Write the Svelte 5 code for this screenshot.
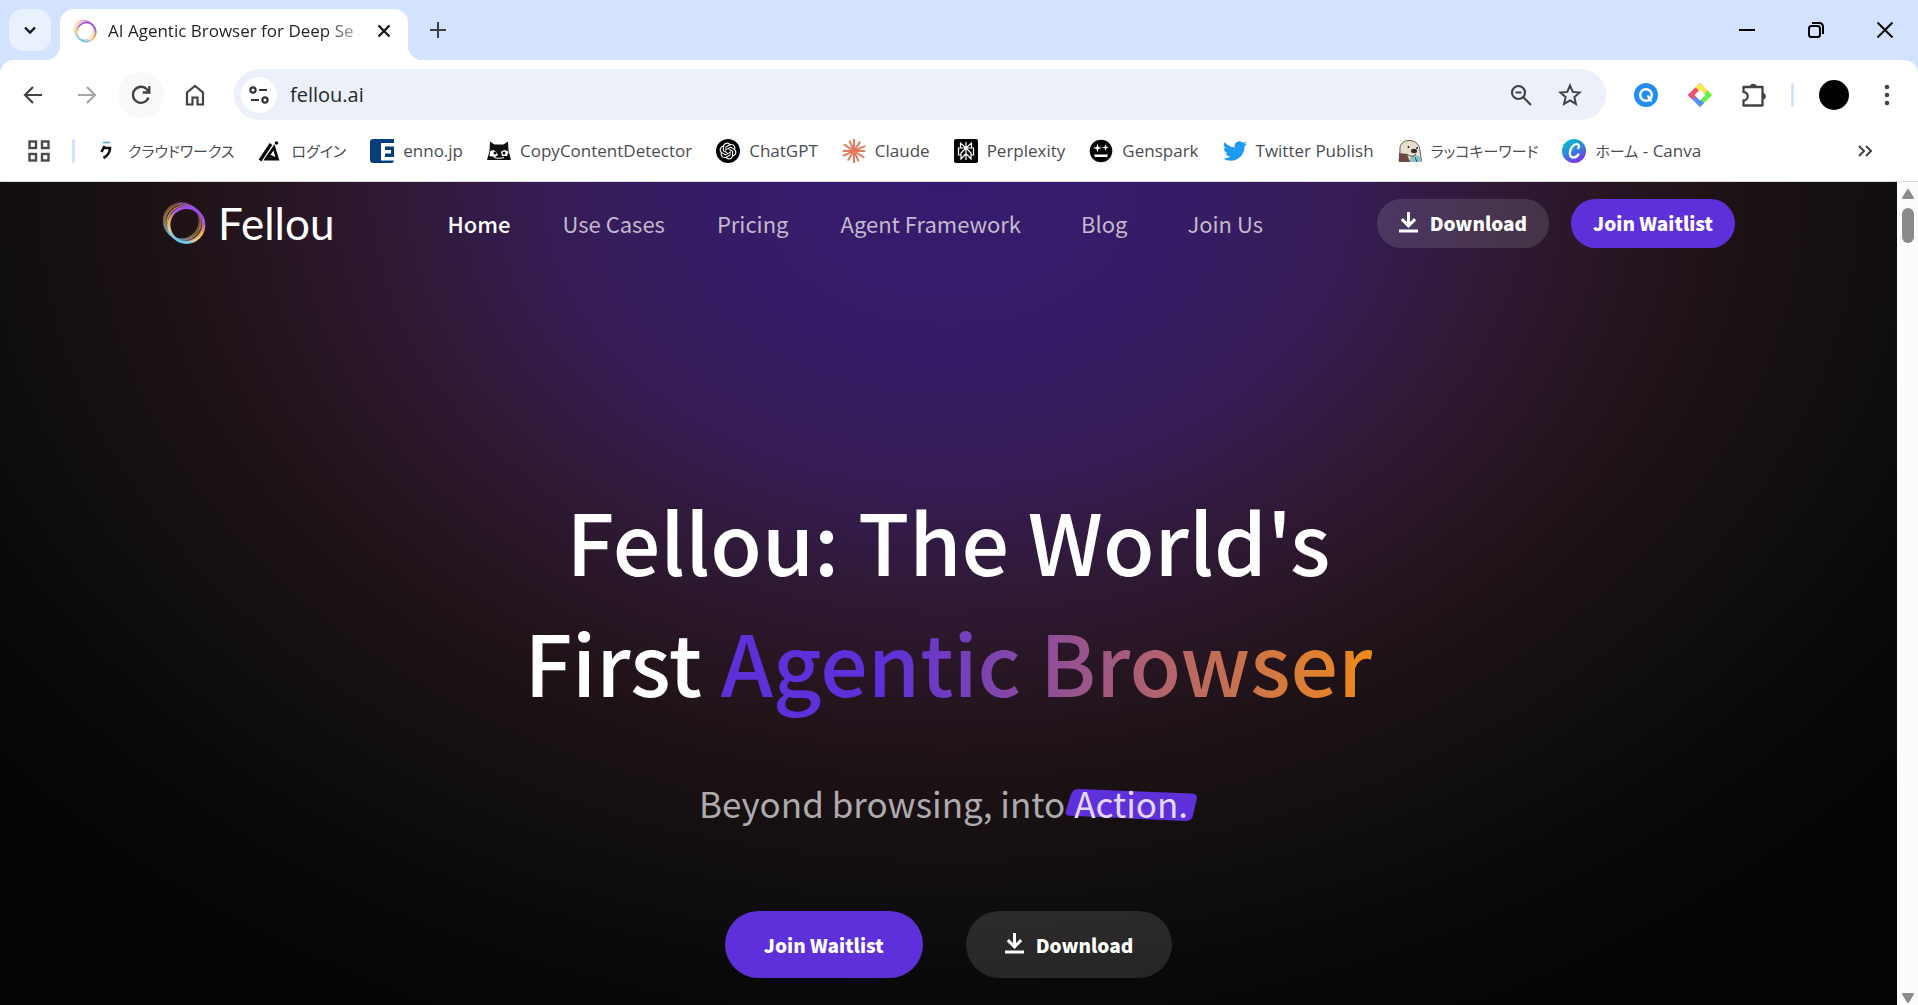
<script>
  const bookmarks = [
    { icon: 'crowd', kana: 'クラウドワークス', label: '' },
    { icon: 'login', kana: 'ログイン', label: '' },
    { icon: 'enno', kana: '', label: 'enno.jp' },
    { icon: 'ccd', kana: '', label: 'CopyContentDetector' },
    { icon: 'chatgpt', kana: '', label: 'ChatGPT' },
    { icon: 'claude', kana: '', label: 'Claude' },
    { icon: 'perplexity', kana: '', label: 'Perplexity' },
    { icon: 'genspark', kana: '', label: 'Genspark' },
    { icon: 'twitter', kana: '', label: 'Twitter Publish' },
    { icon: 'rakko', kana: 'ラッコキーワード', label: '' },
    { icon: 'canva', kana: 'ホーム', label: ' - Canva' }
  ];
  const nav = ['Home', 'Use Cases', 'Pricing', 'Agent Framework', 'Blog', 'Join Us'];
  const rays = [0, 30, 60, 90, 120, 150, 180, 210, 240, 270, 300, 330];
  let address = $state('fellou.ai');
</script>

{#snippet bookmarkIcon(name)}
  <svg class="fav" viewBox="0 0 24 24" aria-hidden="true">
    {#if name === 'crowd'}
      <path d="M8 3.500h7" stroke="#5aa5c4" stroke-width="1.600" />
      <path d="M9.500 7 6.500 13M8.500 9h6.500c0 4-2 7.500-6.500 10" fill="none" stroke="#111" stroke-width="2.600" />
    {:else if name === 'login'}
      <path d="M2 21.500 13 5" fill="none" stroke="#0a0a0a" stroke-width="3.200" />
      <path d="M8 20 16 8.500l3.500 11.500zM10 16l8 4" fill="none" stroke="#0a0a0a" stroke-width="2.800" />
      <circle cx="18.500" cy="4" r="1.800" fill="#111" />
    {:else if name === 'enno'}
      <path d="M3 0h21v21a3 3 0 0 1-3 3H3a3 3 0 0 1-3-3V3a3 3 0 0 1 3-3z" fill="#063e7c" />
      <path d="M11 4h13v3.500h-9V11h6v3.500h-6V18h9v3.500H11z" fill="#fff" />
    {:else if name === 'ccd'}
      <path d="M3 2.500l4.500 3h9l4.500-3 .5 9L24 21H0l2.500-9z" fill="#111" />
      <path d="M3 12.500c2-2 5-1.500 6 .5l2 3-3 2-5.500-1zM14 13c2-2.500 5.500-2.500 7.500 0l-1.500 4h-5z" fill="#fff" />
      <circle cx="8" cy="14" r="1.500" fill="#111" />
      <circle cx="17" cy="14" r="1.500" fill="#111" />
      <path d="M7 18.500c3 1 7 1 10 0" fill="none" stroke="#fff" stroke-width="1" />
    {:else if name === 'chatgpt'}
      <circle cx="12" cy="12" r="12" fill="#050505" />
      <path
        transform="translate(3.600 3.600) scale(.7)"
        fill="#fff"
        d="M22.282 9.821a5.985 5.985 0 0 0-.516-4.910 6.046 6.046 0 0 0-6.510-2.900A6.065 6.065 0 0 0 4.981 4.180a5.985 5.985 0 0 0-3.998 2.900 6.046 6.046 0 0 0 .743 7.097 5.980 5.980 0 0 0 .510 4.911 6.051 6.051 0 0 0 6.515 2.900A5.985 5.985 0 0 0 13.260 24a6.056 6.056 0 0 0 5.772-4.206 5.990 5.990 0 0 0 3.997-2.900 6.056 6.056 0 0 0-.747-7.073zM13.260 22.430a4.476 4.476 0 0 1-2.876-1.040l.141-.081 4.779-2.758a.795.795 0 0 0 .392-.681v-6.737l2.020 1.169a.071.071 0 0 1 .038.052v5.583a4.504 4.504 0 0 1-4.494 4.493zM3.600 18.304a4.471 4.471 0 0 1-.535-3.014l.142.085 4.783 2.759a.771.771 0 0 0 .780 0l5.843-3.369v2.332a.080.080 0 0 1-.033.062L9.740 19.950a4.500 4.500 0 0 1-6.140-1.646zM2.341 7.896a4.485 4.485 0 0 1 2.366-1.973V11.600a.766.766 0 0 0 .388.677l5.815 3.354-2.020 1.169a.076.076 0 0 1-.071 0l-4.831-2.787A4.504 4.504 0 0 1 2.341 7.872zm16.597 3.856-5.833-3.388L15.119 7.200a.076.076 0 0 1 .071 0l4.830 2.791a4.494 4.494 0 0 1-.676 8.105v-5.678a.790.790 0 0 0-.407-.667zm2.010-3.023-.141-.085-4.774-2.782a.776.776 0 0 0-.785 0L9.409 9.230V6.897a.066.066 0 0 1 .028-.061l4.830-2.787a4.499 4.499 0 0 1 6.680 4.660zM8.307 12.863l-2.020-1.164a.080.080 0 0 1-.038-.057V6.075a4.499 4.499 0 0 1 7.375-3.453l-.142.080L8.704 5.460a.795.795 0 0 0-.393.681zm1.097-2.365 2.602-1.500 2.607 1.500v2.999l-2.597 1.500-2.607-1.500z"
      />
    {:else if name === 'claude'}
      {#each rays as angle, i}
        <path d="M12 12V{i % 2 ? 1.5 : 0.5}" transform="rotate({angle + (i % 3) * 3} 12 12)" stroke="#e07b5b" stroke-width="2" stroke-linecap="round" />
      {/each}
    {:else if name === 'perplexity'}
      <rect width="24" height="24" rx="2" fill="#050505" />
      <path d="M12 3v18M12 9 6.500 4v5M12 9l5.500-5v5M4.500 9h15v7H17v4l-5-5.500L7 20v-4H4.500zM12 9 7 14v3M12 9l5 5v3" fill="none" stroke="#fff" stroke-width="1.200" />
    {:else if name === 'genspark'}
      <circle cx="12" cy="12" r="11.300" fill="#050505" />
      <path d="M8.500 4.500l1 3.500 3.500 1-3.500 1-1 3.500-1-3.500-3.500-1L7.500 8zM16.500 5l.8 2.700 2.700.8-2.700.8-.8 2.700-.8-2.700-2.700-.8 2.700-.8z" fill="#fff" />
      <path d="M5 15.500h14l-1 2.500H6z" fill="#fff" />
    {:else if name === 'twitter'}
      <path
        fill="#1d9bf0"
        d="M23.953 4.570a10 10 0 0 1-2.825.775 4.958 4.958 0 0 0 2.163-2.723c-.951.555-2.005.959-3.127 1.184a4.920 4.920 0 0 0-8.384 4.482C7.690 8.095 4.067 6.130 1.640 3.162a4.822 4.822 0 0 0-.666 2.475c0 1.710.870 3.213 2.188 4.096a4.904 4.904 0 0 1-2.228-.616v.060a4.923 4.923 0 0 0 3.946 4.827 4.996 4.996 0 0 1-2.212.085 4.936 4.936 0 0 0 4.604 3.417 9.867 9.867 0 0 1-6.102 2.105c-.390 0-.779-.023-1.170-.067a13.995 13.995 0 0 0 7.557 2.209c9.053 0 13.998-7.496 13.998-13.985 0-.210 0-.420-.015-.630A9.935 9.935 0 0 0 24 4.590z"
      />
    {:else if name === 'rakko'}
      <path d="M2 12C1 5 6 1 12 1.500S22 6 22 12l1.500 10H1z" fill="#e9dfd0" stroke="#6b5a50" stroke-width="1" />
      <path d="M1 14l8 1 3 8H1z" fill="#6b4a42" />
      <path d="M12 19l5-3 6 2v5H12z" fill="#87c5cc" />
      <circle cx="10.500" cy="8" r="1" fill="#222" />
      <circle cx="19" cy="9" r="1" fill="#222" />
      <ellipse cx="16" cy="12" rx="3" ry="2.200" fill="#3c2c2a" />
      <path d="M9 15c3 3 7 3 9 0M17 18l2 5" fill="none" stroke="#444" stroke-width="1" />
    {:else if name === 'canva'}
      <defs>
        <linearGradient id="canvaFill" x1="0.200" y1="0" x2="0.700" y2="1">
          <stop offset="0" stop-color="#00c4cc" />
          <stop offset="0.500" stop-color="#2f85dc" />
          <stop offset="1" stop-color="#7d2ae8" />
        </linearGradient>
      </defs>
      <circle cx="12" cy="12" r="12" fill="url(#canvaFill)" />
      <path d="M16.300 9c1.200-1.500.8-3.800-1.500-3.800-3.500 0-7 4.600-7 8.800 0 2.700 1.400 4.500 3.700 4.500 2 0 3.700-1.200 4.900-3" fill="none" stroke="#fff" stroke-width="2.300" stroke-linecap="round" />
    {/if}
  </svg>
{/snippet}

{#snippet ring(cls)}
  <svg class={cls} viewBox="0 0 44 44" aria-hidden="true">
    <defs>
      <linearGradient id="{cls}Stroke" x1="0.800" y1="0" x2="0.400" y2="1">
        <stop offset="0" stop-color="#9a45f2" />
        <stop offset="0.350" stop-color="#a95fd8" />
        <stop offset="0.600" stop-color="#f5b04e" />
        <stop offset="0.800" stop-color="#f3c98a" />
        <stop offset="1" stop-color="#5fc6f4" />
      </linearGradient>
      <linearGradient id="{cls}Inner" x1="0.700" y1="0" x2="0.100" y2="0.900">
        <stop offset="0" stop-color="#a058e8" />
        <stop offset="0.350" stop-color="#f0a040" />
        <stop offset="0.650" stop-color="#e8c080" />
        <stop offset="1" stop-color="#5fc6f4" />
      </linearGradient>
    </defs>
    <g fill="none" stroke-width="1.600">
      <circle cx="19.500" cy="20" r="18" stroke="url(#{cls}Inner)" opacity="0.500" />
      <circle cx="21" cy="21" r="18" stroke="url(#{cls}Inner)" opacity="0.650" />
      <circle cx="23" cy="22.500" r="18" stroke="url(#{cls}Inner)" opacity="0.800" />
      <circle cx="24.500" cy="24" r="17.500" stroke="url(#{cls}Stroke)" stroke-width="2.800" />
    </g>
  </svg>
{/snippet}

{#snippet downloadIcon()}
  <svg class="dl" viewBox="0 0 20 22" aria-hidden="true">
    <path d="M10 0v13M3 7.500l7 7 7-7M0 20h20" fill="none" stroke="currentColor" stroke-width="3.200" />
  </svg>
{/snippet}

<div class="window">
  <div class="tabstrip">
    <button class="tab-search" aria-label="Search tabs">
      <svg width="14" height="14" viewBox="0 0 14 14"><path d="M2 4.500 7 9.500l5-5" fill="none" stroke="#15181c" stroke-width="2.400" /></svg>
    </button>
    <div class="tab">
      {@render ring('tabRing')}
      <span class="tab-title">AI Agentic Browser for Deep Se</span>
      <button class="plain" aria-label="Close tab">
        <svg width="14" height="14" viewBox="0 0 14 14"><path d="M1.500 1.500l11 11m0-11-11 11" stroke="#15181c" stroke-width="2.400" /></svg>
      </button>
    </div>
    <button class="plain new-tab" aria-label="New tab">
      <svg width="16" height="16" viewBox="0 0 16 16"><path d="M8 0v16M0 8h16" stroke="#3c4043" stroke-width="2" /></svg>
    </button>
    <div class="window-controls">
      <button class="plain" aria-label="Minimize"><svg width="16" height="16" viewBox="0 0 16 16"><path d="M0 8h16" stroke="#000" stroke-width="2" /></svg></button>
      <button class="plain" aria-label="Restore">
        <svg width="16" height="16" viewBox="0 0 16 16" fill="none" stroke="#000" stroke-width="2"><rect x="1" y="4" width="11" height="11" rx="2.500" /><path d="M4 1h7.500A3.500 3.500 0 0 1 15 4.500V12" /></svg>
      </button>
      <button class="plain" aria-label="Close"><svg width="16" height="16" viewBox="0 0 16 16"><path d="M.5.500l15 15m0-15-15 15" stroke="#000" stroke-width="2" /></svg></button>
    </div>
  </div>

  <div class="toolbar">
    <button class="tool" aria-label="Back"><svg width="20" height="20" viewBox="0 0 20 20"><path d="M19 10H3M10 2l-8 8 8 8" fill="none" stroke="#3f4246" stroke-width="2.200" /></svg></button>
    <button class="tool" aria-label="Forward"><svg width="20" height="20" viewBox="0 0 20 20"><path d="M1 10h16M10 2l8 8-8 8" fill="none" stroke="#a4a6a8" stroke-width="2.200" /></svg></button>
    <button class="tool soft" aria-label="Reload">
      <svg width="20" height="20" viewBox="0 0 20 20"><path d="M17.500 12.500A8 8 0 1 1 16 4.500l2 2.500M18.300 1v6.500h-6.500" fill="none" stroke="#3f4246" stroke-width="2.300" /></svg>
    </button>
    <button class="tool" aria-label="Home"><svg width="20" height="22" viewBox="0 0 20 22"><path d="M2 8.500 10 2l8 6.500V20.500h-5.500v-7h-5v7H2z" fill="none" stroke="#3f4246" stroke-width="2.200" /></svg></button>
    <div class="omnibox">
      <button class="site-info" aria-label="Site information">
        <svg width="20" height="18" viewBox="0 0 20 18" fill="none" stroke="#303338" stroke-width="2.200"><circle cx="4" cy="4" r="2.600" /><path d="M10 4h8M2 14h8" /><circle cx="16" cy="14" r="2.600" /></svg>
      </button>
      <input type="text" aria-label="Address" bind:value={address} />
      <button class="plain" aria-label="Zoom">
        <svg width="22" height="22" viewBox="0 0 22 22" fill="none" stroke="#3f4246" stroke-width="2.200"><circle cx="8.500" cy="8.500" r="6.500" /><path d="M13.300 13.300 21 21M5.500 8.500h6" /></svg>
      </button>
      <button class="plain" aria-label="Bookmark this page">
        <svg width="24" height="24" viewBox="0 0 24 24"><path d="M12 2.500l2.700 6.400 6.900.6-5.200 4.600 1.500 6.800L12 17.300l-5.900 3.600 1.500-6.800-5.200-4.600 6.900-.6z" fill="none" stroke="#3f4246" stroke-width="2" /></svg>
      </button>
    </div>
    <div class="extensions">
      <button class="plain" aria-label="Q extension">
        <svg width="24" height="24" viewBox="0 0 24 24"><circle cx="12" cy="12" r="12" fill="#258cf4" /><circle cx="12" cy="12" r="5.800" fill="none" stroke="#fff" stroke-width="2.400" /><path d="M12.500 12.500h2.500l3.500 6h-3z" fill="#fff" /></svg>
      </button>
      <button class="plain" aria-label="Colour extension">
        <svg width="24" height="24" viewBox="0 0 24 24"><path d="M12 0 0 12l4.500 4.500L16.500 4.500z" fill="#f2506e" /><path d="M12 0l12 12-4.500 4.500L7.500 4.500z" fill="#fbe84a" /><path d="M24 12 12 24l-4.500-4.500L19.500 7.500z" fill="#66f04c" /><path d="M12 24 0 12l4-4 12 12z" fill="#5b8df5" /><path d="M0 12l7.500-7.500L12 9l-7.500 7.500z" fill="#f2506e" /><path d="M12 6.500l5.500 5.500-5.500 5.500L6.500 12z" fill="#fff" /></svg>
      </button>
      <button class="plain" aria-label="Extensions">
        <svg width="24" height="24" viewBox="0 0 24 24"><path d="M1.500 4H20.500V22.500H1.500V17.500a4 4 0 0 0 0-8.500z" fill="none" stroke="#3f4246" stroke-width="2.300" stroke-linejoin="round" /><path d="M8 4a3.300 3.300 0 0 1 6.600 0zM20.500 10a3.300 3.300 0 0 1 0 6.600z" fill="#3f4246" /></svg>
      </button>
      <span class="divider"></span>
      <button class="plain avatar" aria-label="Profile"></button>
      <button class="plain" aria-label="Menu"><svg width="6" height="22" viewBox="0 0 6 22" fill="#3f4246"><circle cx="3" cy="3" r="2.300" /><circle cx="3" cy="11" r="2.300" /><circle cx="3" cy="19" r="2.300" /></svg></button>
    </div>
  </div>

  <div class="bookmarks">
    <button class="plain" aria-label="Apps">
      <svg width="22" height="22" viewBox="0 0 22 22" fill="none" stroke="#4a4a4a" stroke-width="2.400"><rect x="1.500" y="1.500" width="6.500" height="6.500" /><rect x="14" y="1.500" width="6.500" height="6.500" /><rect x="1.500" y="14" width="6.500" height="6.500" /><rect x="14" y="14" width="6.500" height="6.500" /></svg>
    </button>
    <span class="divider"></span>
    <ul>
      {#each bookmarks as item}
        <li>
          <a href="#{item.icon}">
            {@render bookmarkIcon(item.icon)}
            <span>{#if item.kana}<span class="kana">{item.kana}</span>{/if}{item.label}</span>
          </a>
        </li>
      {/each}
    </ul>
    <button class="plain more" aria-label="More bookmarks">
      <svg width="14" height="12" viewBox="0 0 14 12"><path d="M1 1l5 5-5 5M8 1l5 5-5 5" fill="none" stroke="#3f4246" stroke-width="2" /></svg>
    </button>
  </div>

  <div class="viewport">
    <div class="page">
      <header>
        <a class="logo" href="#home">{@render ring('logoRing')}<span>Fellou</span></a>
        <nav>
          {#each nav as item, i}
            <a class:active={i === 0} class:wide={i > 3} href="#{item}">{item}</a>
          {/each}
        </nav>
        <div class="actions">
          <button class="pill ghost">{@render downloadIcon()}Download</button>
          <button class="pill primary">Join Waitlist</button>
        </div>
      </header>
      <main>
        <h1>Fellou: The World's<br />First <span>Agentic Browser</span></h1>
        <p>
          Beyond browsing, into
          <span class="action">
            <svg viewBox="0 0 134 36" preserveAspectRatio="none" aria-hidden="true"><path d="M14 0 127 5q7 0 6 6l-4 19q-1 6-8 6L5 30q-6 0-4-6L6 6q2-6 8-6z" fill="#5e30d9" /></svg>
            <span>Action.</span>
          </span>
        </p>
        <div class="cta">
          <button class="pill large primary">Join Waitlist</button>
          <button class="pill large ghost">{@render downloadIcon()}Download</button>
        </div>
      </main>
    </div>
    <div class="scrollbar" aria-hidden="true">
      <svg width="14" height="12" viewBox="0 0 14 12"><path d="M7 2l5 8H2z" fill="#8b8b8b" stroke="#8b8b8b" stroke-width="2" stroke-linejoin="round" /></svg>
      <span class="thumb"></span>
      <svg width="14" height="12" viewBox="0 0 14 12"><path d="M7 10l5-8H2z" fill="#8b8b8b" stroke="#8b8b8b" stroke-width="2" stroke-linejoin="round" /></svg>
    </div>
  </div>
</div>

<style>
  :global(body) {
    margin: 0;
    background: #d3e3fd;
  }
  .window {
    display: flex;
    flex-direction: column;
    min-height: 100vh;
    font-family: 'Open Sans', 'Noto Sans CJK JP', sans-serif;
    color: #1f2124;
  }
  button {
    font: inherit;
    border: 0;
    padding: 0;
    cursor: pointer;
  }
  a {
    color: inherit;
    text-decoration: none;
  }
  svg {
    display: block;
    flex: none;
  }
  .plain {
    display: grid;
    place-items: center;
    background: none;
  }

  .tabstrip {
    display: flex;
    align-items: center;
    height: 60px;
    padding: 0 25px 0 9px;
  }
  .tab-search {
    display: grid;
    place-items: center;
    width: 42px;
    height: 42px;
    border-radius: 14px;
    background: #e9f0fe;
  }
  .tab {
    position: relative;
    display: flex;
    align-items: center;
    align-self: flex-end;
    box-sizing: border-box;
    width: 348px;
    height: 51px;
    margin-left: 9px;
    padding: 0 17px 7px 13px;
    border-radius: 14px 14px 0 0;
    background: #fff;
  }
  .tab::before,
  .tab::after {
    content: '';
    position: absolute;
    bottom: 0;
    width: 14px;
    height: 14px;
  }
  .tab::before {
    right: 100%;
    background: radial-gradient(circle at 0 0, transparent 14px, #fff 14px);
  }
  .tab::after {
    left: 100%;
    background: radial-gradient(circle at 100% 0, transparent 14px, #fff 14px);
  }
  .tab :global(.tabRing) {
    width: 24px;
    height: 24px;
  }
  .tab-title {
    flex: 1;
    margin: 0 16px 0 11px;
    white-space: nowrap;
    font-size: 17px;
    line-height: 24px;
    mask-image: linear-gradient(to right, #000 86%, transparent 104%);
  }
  .new-tab {
    margin-left: 22px;
  }
  .window-controls {
    display: flex;
    gap: 53px;
    margin-left: auto;
  }

  .toolbar {
    display: flex;
    align-items: center;
    height: 69px;
    padding: 0 24px 0 10px;
    border-radius: 14px 14px 0 0;
    background: #fff;
  }
  .tool {
    display: grid;
    place-items: center;
    width: 46px;
    height: 46px;
    margin-right: 8px;
    border-radius: 50%;
    background: none;
  }
  .tool.soft {
    background: #f9f9fa;
  }
  .omnibox {
    display: flex;
    flex: 1;
    align-items: center;
    gap: 26px;
    height: 51px;
    margin-left: 8px;
    padding: 0 24px 0 7px;
    border-radius: 26px;
    background: #ebf0f9;
  }
  .site-info {
    display: grid;
    place-items: center;
    width: 36px;
    height: 36px;
    border-radius: 50%;
    background: #fff;
  }
  .omnibox input {
    flex: 1;
    min-width: 0;
    margin-left: -13px;
    padding: 0;
    border: 0;
    outline: 0;
    background: none;
    color: #25282c;
    font: inherit;
    font-size: 20px;
  }
  .extensions {
    display: flex;
    align-items: center;
    gap: 30px;
    margin-left: 28px;
  }
  .divider {
    width: 3px;
    height: 24px;
    border-radius: 2px;
    background: #d3e3fd;
  }
  .extensions .divider {
    margin: 0 -5px;
  }
  .avatar {
    width: 30px;
    height: 30px;
    border-radius: 50%;
    background: #000;
  }
  .extensions .avatar + .plain {
    margin-left: 5px;
    margin-right: 4px;
  }

  .bookmarks {
    display: flex;
    align-items: center;
    height: 43px;
    padding: 0 46px 9px 28px;
    border-bottom: 1px solid #dcdcdc;
    background: #fff;
  }
  .bookmarks .divider {
    margin-left: 22px;
  }
  .bookmarks ul {
    display: flex;
    gap: 24px;
    margin: 0 0 0 20px;
    padding: 0;
    list-style: none;
  }
  .bookmarks a {
    display: flex;
    align-items: center;
    gap: 9px;
    font-size: 17px;
    line-height: 24px;
    color: #4a4d50;
    white-space: nowrap;
    font-feature-settings: 'palt';
  }
  .kana {
    font-family: 'Noto Sans CJK JP', sans-serif;
    font-size: 15px;
  }
  .fav {
    width: 24px;
    height: 24px;
  }
  .more {
    margin-left: auto;
  }

  .viewport {
    display: flex;
    flex: 1;
    font-family: 'Noto Sans CJK JP', sans-serif;
  }
  .page {
    flex: 1;
    background: radial-gradient(
      ellipse 1100px 820px at 50% 0,
      #351b70 0%,
      #361c66 22%,
      #351c54 37%,
      #301a3a 48%,
      #281624 60%,
      #1d1215 71%,
      #110e0e 86%,
      #0a0909 98%,
      #040404 118%
    );
  }
  header {
    display: flex;
    align-items: center;
    height: 82px;
    padding: 0 162px;
  }
  .logo {
    display: flex;
    align-items: center;
    gap: 12px;
    color: #fff;
    font-family: Lato, sans-serif;
    font-size: 44px;
    line-height: 48px;
  }
  .logo :global(.logoRing) {
    width: 44px;
    height: 44px;
  }
  nav {
    display: flex;
    gap: 52px;
    margin-left: 113px;
    color: #c3bacd;
    font-size: 22px;
    line-height: 36px;
    white-space: nowrap;
  }
  nav .active {
    color: #fff;
    font-weight: 500;
  }
  nav .wide {
    margin-left: 8px;
  }
  .actions {
    display: flex;
    gap: 22px;
    margin-left: auto;
  }
  .pill {
    display: flex;
    align-items: center;
    justify-content: center;
    gap: 12px;
    height: 49px;
    padding: 0 22px;
    border-radius: 34px;
    color: #fff;
    font-size: 19px;
    font-weight: 900;
    line-height: 30px;
    white-space: nowrap;
  }
  .large {
    height: 67px;
    padding: 0 39px;
  }
  .primary {
    background: #5e30d9;
  }
  .ghost {
    background: rgba(255, 255, 255, 0.12);
  }
  .dl {
    width: 19px;
    height: 21px;
    margin-bottom: 2px;
  }
  main {
    display: flex;
    flex-direction: column;
    align-items: center;
    padding: 215px 24px 28px;
    text-align: center;
  }
  h1 {
    margin: 0;
    color: #fff;
    font-size: 84px;
    font-weight: 500;
    line-height: 121px;
  }
  h1 span {
    background: linear-gradient(to right, #5e30d9 25%, #f08a1a);
    background-clip: text;
    color: transparent;
  }
  p {
    display: flex;
    margin: 55px 0 0;
    color: #aeaaae;
    font-size: 35px;
    line-height: 54px;
  }
  .action {
    position: relative;
    padding: 0 10px 0 9px;
    color: #e3d9fb;
  }
  .action svg {
    position: absolute;
    top: 13px;
    left: 0;
    width: 100%;
    height: 32px;
  }
  .action span {
    position: relative;
  }
  .cta {
    display: flex;
    gap: 43px;
    margin-top: 81px;
  }
  .scrollbar {
    display: flex;
    flex-direction: column;
    align-items: center;
    width: 21px;
    padding: 6px 0 2px;
    box-sizing: border-box;
    background: #fcfcfc;
  }
  .thumb {
    width: 12px;
    height: 35px;
    margin: 8px 0 auto;
    border-radius: 6px;
    background: #8b8b8b;
  }
</style>
